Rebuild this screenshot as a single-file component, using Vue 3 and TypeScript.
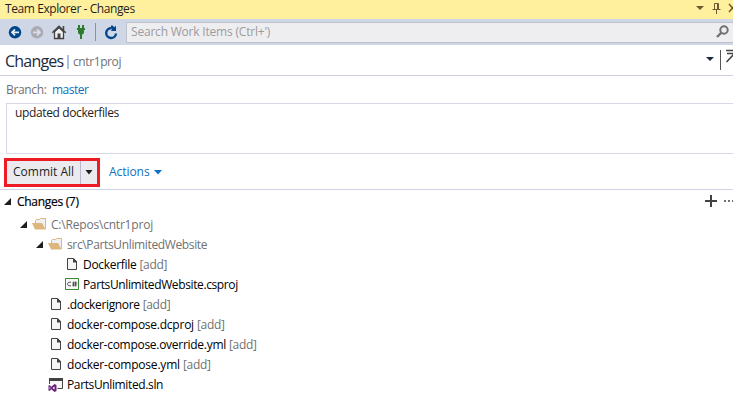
<script setup lang="ts">
interface Node {
  name: string
  kind: 'folder' | 'file' | 'cs' | 'sln'
  depth: number
  added?: boolean
  spacing: number
}

const nodes: Node[] = [
  { name: 'C:\\Repos\\cntr1proj', kind: 'folder', depth: 0, spacing: -0.2 },
  { name: 'src\\PartsUnlimitedWebsite', kind: 'folder', depth: 1, spacing: -0.36 },
  { name: 'Dockerfile', kind: 'file', depth: 2, added: true, spacing: -0.3 },
  { name: 'PartsUnlimitedWebsite.csproj', kind: 'cs', depth: 2, spacing: -0.38 },
  { name: '.dockerignore', kind: 'file', depth: 1, added: true, spacing: -0.35 },
  { name: 'docker-compose.dcproj', kind: 'file', depth: 1, added: true, spacing: -0.24 },
  { name: 'docker-compose.override.yml', kind: 'file', depth: 1, added: true, spacing: -0.28 },
  { name: 'docker-compose.yml', kind: 'file', depth: 1, added: true, spacing: -0.2 },
  { name: 'PartsUnlimited.sln', kind: 'sln', depth: 1, spacing: -0.37 },
]
</script>

<template>
  <div class="panel">
    <header class="titlebar">
      <span class="title">Team Explorer - Changes</span>
      <svg class="window-icons" width="40" height="19" viewBox="0 0 40 19">
        <path d="M3 6h8L7 10z" fill="#6b5c2e" />
        <path d="M21.500 3.500h4v6h-4zM19.500 9.500h8M23.500 10v4M24.500 4v5" fill="none" stroke="#6b5c2e" />
        <path d="M36 4l7 8M43 4l-7 8" fill="none" stroke="#6b5c2e" stroke-width="1.500" />
      </svg>
    </header>

    <div class="toolbar">
      <svg width="126" height="26" viewBox="0 0 126 26">
        <circle cx="15" cy="13.300" r="6.200" fill="#00468c" />
        <path d="M19 13.300h-7M15 10.300l-3 3 3 3" fill="none" stroke="#e6edf8" stroke-width="1.700" />
        <circle cx="37" cy="13.300" r="6.200" fill="#aaacb2" />
        <path d="M33 13.300h7M37 10.300l3 3-3 3" fill="none" stroke="#d9deea" stroke-width="1.700" />
        <path d="M54.500 12.800v6.700h9v-6.700L59 8.500z" fill="#f0eff1" stroke="#424242" stroke-width="1.300" />
        <path d="M52.300 13.800L59 7.300l6.700 6.500M63.500 7v4" fill="none" stroke="#424242" stroke-width="1.500" />
        <path d="M57.500 14.500h3v4.500h-3z" fill="#424242" />
        <path d="M78 6h2v3h2V6h2v3h1v2h-1v3l-1.500 1.500H82V20h-2v-4.500h-.5L78 14v-3h-1V9h1z" fill="#2b7d2b" />
        <path d="M95.500 4v18" stroke="#8b93a7" />
        <path d="M111.500 9.200a4.900 4.900 0 1 0 4.500 5.300" fill="none" stroke="#00468c" stroke-width="2.400" />
        <path d="M111 6.500h1.500l1.800 1.800L116 6.800V12h-5.300l1.500-1.500-1.200-1.200z" fill="#00468c" />
      </svg>
      <div class="search">
        <span class="placeholder">Search Work Items (Ctrl+')</span>
        <svg width="18" height="18" viewBox="0 0 18 18">
          <circle cx="9" cy="7" r="3.700" fill="none" stroke="#717171" stroke-width="2" />
          <path d="M6.500 9.500L2 14" stroke="#717171" stroke-width="2.400" />
        </svg>
      </div>
    </div>

    <div class="heading">
      <span class="page">Changes</span>
      <span class="divider"></span>
      <span class="project">cntr1proj</span>
      <svg class="heading-icons" width="28" height="30" viewBox="0 0 28 30">
        <path d="M1 12h8L5 16z" fill="#1b293e" />
        <path d="M15.500 5v20" stroke="#555" />
        <path d="M21 5.500h8M22 8.500h7M21.500 17l7-7.500" fill="none" stroke="#424242" stroke-width="1.500" />
      </svg>
    </div>

    <div class="branch">
      <span class="branch-label">Branch:</span>
      <a class="branch-name">master</a>
    </div>

    <div class="message"><span class="message-text">updated dockerfiles</span></div>

    <div class="actions">
      <div class="commit">
        <span class="commit-label">Commit All</span>
        <span class="commit-drop">
          <svg width="8" height="5" viewBox="0 0 8 5"><path d="M.5 0h7L4 4.500z" fill="#1e1e1e" /></svg>
        </span>
      </div>
      <a class="menu">Actions</a>
      <svg class="menu-arrow" width="8" height="5" viewBox="0 0 8 5"><path d="M0 0h8L4 4.500z" fill="#0e70c0" /></svg>
    </div>

    <div class="section">
      <svg width="8" height="8" viewBox="0 0 8 8"><path d="M7 0v7H0z" fill="#1e1e1e" /></svg>
      <span class="section-title">Changes (7)</span>
      <svg class="section-icons" width="29" height="14" viewBox="0 0 29 14">
        <path d="M7 0v12M1 6h12" stroke="#424242" stroke-width="2" />
        <path d="M20 5h2v2h-2zM24 5h2v2h-2zM28 5h2v2h-2z" fill="#717171" />
      </svg>
    </div>

    <ul class="tree">
      <li v-for="node in nodes" :key="node.name" :class="['row', 'depth-' + node.depth]">
        <svg class="arrow" width="8" height="8" viewBox="0 0 8 8">
          <path v-if="node.kind === 'folder'" d="M7 0v7H0z" fill="#1e1e1e" />
        </svg>
        <svg class="icon" width="16" height="16" viewBox="0 0 16 16">
          <template v-if="node.kind === 'folder'">
            <path d="M3.500 8V4.500l1-1h3l1-1h5V13" fill="#f0eff1" stroke="#dcb67a" />
            <path d="M0 7h10l3.500 6.500H3z" fill="#dcb67a" />
          </template>
          <template v-else-if="node.kind === 'file'">
            <path d="M3.500 2.500h6l3 3v8h-9z" fill="#f6f6f6" stroke="#424242" />
            <path d="M9 2.500h1l3 3v1H9z" fill="#424242" />
          </template>
          <template v-else-if="node.kind === 'cs'">
            <path d="M1.500 2.500h13v11h-13z" fill="#f6f6f6" stroke="#388a34" />
            <path d="M7 6.200H4.700L3.700 7.200v1.600l1 1H7M9.800 5.500l-.5 5M11.800 5.500l-.5 5M8.300 7h4.900M8.100 9h4.900" fill="none" stroke="#424242" stroke-width="0.900" />
          </template>
          <template v-else>
            <path d="M1.500 8V2.500h13v10H9" fill="#f6f6f6" stroke="#424242" />
            <path d="M1 2h14v3H1z" fill="#424242" />
            <path d="M0 8h9.500v8H0z" fill="#fff" />
            <path d="M6.500 8l2 1v6l-2 1-3.200-2.800L1.500 15l-1-.6V9.600l1-.6 1.800 1.800zM6.500 10.500L4.500 12l2 1.600zM1.600 10.800v2.400L2.600 12z" fill="#68217a" fill-rule="evenodd" />
          </template>
        </svg>
        <span :class="['name', { muted: node.kind === 'folder' }]" :style="{ letterSpacing: node.spacing + 'px' }">{{ node.name }}</span>
        <span v-if="node.added" class="tag">[add]</span>
      </li>
    </ul>
  </div>
</template>

<style>
body { background: #fff; overflow: hidden; }
</style>

<style scoped>
.panel {
  width: 733px;
  height: 416px;
  overflow: hidden;
  background: #fff;
  color: #1e1e1e;
  font: 12px/20px "Open Sans", "Noto Sans", sans-serif;
  letter-spacing: -0.2px;
  white-space: nowrap;
}
svg { display: block; flex: none; }
.titlebar {
  display: flex;
  justify-content: space-between;
  height: 19px;
  padding-left: 5px;
  background: #fff09d;
  line-height: 18px;
}
.title { letter-spacing: -0.42px; }
.toolbar { display: flex; align-items: center; height: 26px; background: #cfd6e5; }
.search {
  display: flex;
  align-items: center;
  justify-content: space-between;
  box-sizing: border-box;
  width: 607px;
  height: 21px;
  padding: 0 0 0 4px;
  border: 1px solid #bdc2cc;
  border-right: 0;
  background: #eeeef0;
  color: #9b9b9f;
}
.heading {
  display: flex;
  align-items: center;
  height: 30px;
  padding-left: 5px;
  border-bottom: 1px solid #ccd0e0;
}
.page { width: 62px; padding-top: 1px; color: #1b293e; font-size: 16px; letter-spacing: -0.8px; }
.divider { width: 2px; height: 14px; margin: 3px 4px 0 0; background: #a9c3df; }
.project { padding-top: 3px; color: #717171; letter-spacing: -0.4px; }
.heading-icons { margin-left: auto; }
.branch { display: flex; height: 27px; padding-left: 6px; line-height: 28px; }
.branch-label { width: 46px; color: #717171; letter-spacing: -0.35px; }
.branch-name, .menu { color: #0e70c0; }
.branch-name { letter-spacing: -0.5px; }
.message {
  box-sizing: border-box;
  height: 51px;
  margin-left: 6px;
  padding-left: 8px;
  border: 1px solid #d8d9e6;
  border-right: 0;
  line-height: 18px;
  letter-spacing: -0.37px;
}
.actions {
  display: flex;
  align-items: center;
  height: 35px;
  padding-left: 4px;
  border-bottom: 1px solid #d0d3e3;
}
.commit {
  display: flex;
  box-sizing: border-box;
  width: 96px;
  height: 29px;
  margin: 2px 9px 0 0;
  border: 3px solid #ed1c24;
  background: #eaeaef;
}
.commit-label {
  box-sizing: border-box;
  width: 74px;
  padding-left: 6px;
  border-right: 1px solid #b8b8c8;
  line-height: 22px;
  letter-spacing: 0;
}
.commit-drop { display: flex; flex: 1; align-items: center; justify-content: center; }
.menu { width: 45px; padding-top: 1px; letter-spacing: -0.05px; }
.menu-arrow { margin-top: 2px; }
.section { display: flex; align-items: center; height: 24px; padding-left: 4px; }
.section-title { margin-left: 5px; color: #000; letter-spacing: -0.3px; -webkit-text-stroke: 0.2px; }
.section-icons { margin-left: auto; }
.tree { margin: 0; padding: 1px 0 0; list-style: none; }
.row { display: flex; align-items: center; height: 20px; }
.depth-0 { padding-left: 20px; }
.depth-1 { padding-left: 36px; }
.depth-2 { padding-left: 52px; }
.icon { margin: 0 3px 2px 4px; }
.name { color: #000; }
.name.muted, .tag { color: #717171; }
.tag { margin-left: 3px; letter-spacing: -0.3px; }
</style>
